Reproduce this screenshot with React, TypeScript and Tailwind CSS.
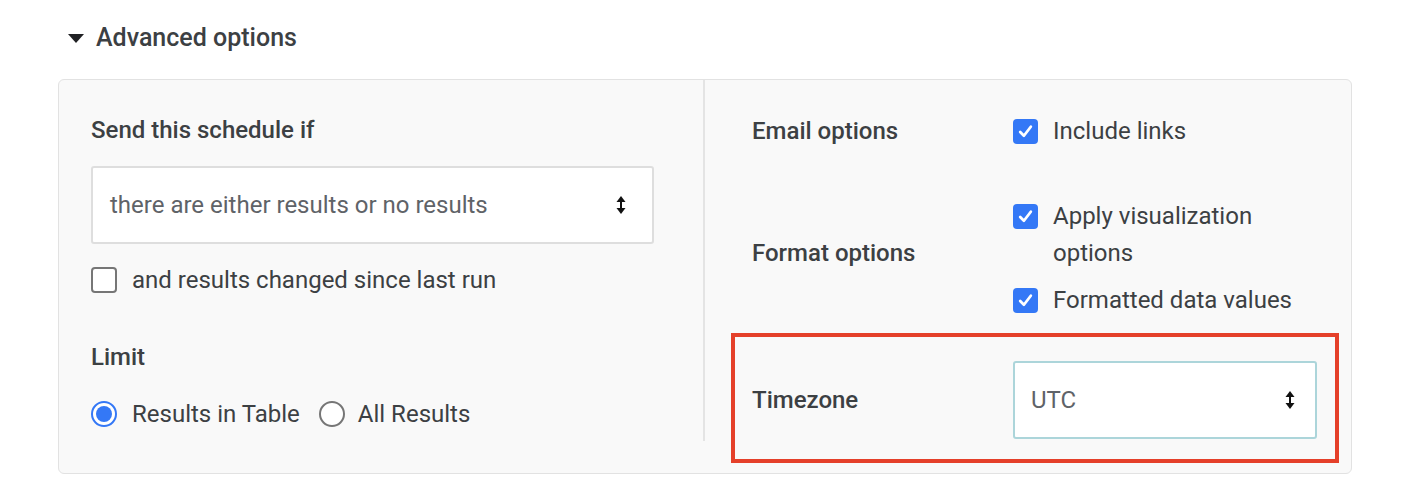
import React from "react";

// double-headed arrow used by the native-looking selects
function SelectArrows() {
  return (
    <svg width="10" height="18" viewBox="0 0 10 18" className="shrink-0">
      <path d="M5 0 L9.5 6 L0.5 6 Z" fill="#111" />
      <rect x="4" y="5" width="2" height="8" fill="#111" />
      <path d="M5 18 L9.5 12 L0.5 12 Z" fill="#111" />
    </svg>
  );
}

function Checked() {
  return (
    <span className="flex h-[25px] w-[25px] shrink-0 items-center justify-center rounded-[4px] bg-[#3478f6]">
      <svg width="17" height="17" viewBox="0 0 16 16">
        <path
          d="M3 8.5 L6.5 12 L13 3.5"
          fill="none"
          stroke="white"
          strokeWidth="2.6"
          strokeLinecap="round"
          strokeLinejoin="round"
        />
      </svg>
    </span>
  );
}

function CheckRow({ children }: { children: React.ReactNode }) {
  return (
    <div className="flex items-start gap-[15px]">
      <div className="flex h-[36px] items-center">
        <Checked />
      </div>
      <span className="leading-[37px]">{children}</span>
    </div>
  );
}

export default function App() {
  return (
    <div className="min-h-screen bg-white pl-[58px] pr-[72px] pt-[20px] text-[24px] text-[#3c4043] [font-family:Roboto,'Liberation_Sans',sans-serif]">
      {/* Header */}
      <div className="flex h-[36px] items-center gap-[12px] pl-[10px]">
        <svg width="16" height="9" viewBox="0 0 16 9">
          <path d="M0 0 L16 0 L8 9 Z" fill="#202124" />
        </svg>
        <span className="text-[25px] font-medium">Advanced options</span>
      </div>

      {/* Panel */}
      <div className="mt-[23px] flex rounded-md border border-[#e2e2e2] bg-[#f9f9f9] pb-[32px]">
        {/* Left column */}
        <div className="w-1/2 border-r-2 border-[#e4e4e4] pb-[9px] pl-[32px] pr-[49px] pt-[32px]">
          <div className="font-medium leading-[36px]">Send this schedule if</div>
          <div className="mt-[18px] flex h-[78px] items-center justify-between rounded-[3px] border-2 border-[#dedede] bg-white pl-[17px] pr-[26px]">
            <span className="text-[#5f6368]">there are either results or no results</span>
            <SelectArrows />
          </div>
          <div className="mt-[18px] flex h-[36px] items-center gap-[15px]">
            <span className="h-[26px] w-[26px] rounded-[4px] border-2 border-[#767676] bg-white" />
            <span>and results changed since last run</span>
          </div>
          <div className="mt-[41px] font-medium leading-[36px]">Limit</div>
          <div className="mt-[21px] flex h-[36px] items-center">
            <span className="flex h-[26px] w-[26px] items-center justify-center rounded-full border-2 border-[#3478f6] bg-white">
              <span className="h-[16px] w-[16px] rounded-full bg-[#3478f6]" />
            </span>
            <span className="ml-[15px]">Results in Table</span>
            <span className="ml-[19px] h-[26px] w-[26px] rounded-full border-2 border-[#767676] bg-white" />
            <span className="ml-[13px]">All Results</span>
          </div>
        </div>

        {/* Right column */}
        <div className="w-1/2 pl-[47px] pr-[34px] pt-[33px]">
          <div className="grid grid-cols-[261px_1fr]">
            <div className="font-medium leading-[36px]">Email options</div>
            <CheckRow>Include links</CheckRow>
          </div>

          <div className="mt-[48px] grid grid-cols-[261px_1fr] items-start">
            <div className="mt-[37px] font-medium leading-[36px]">Format options</div>
            <div className="flex flex-col gap-[10px]">
              <CheckRow>
                Apply visualization
                <br />
                options
              </CheckRow>
              <CheckRow>Formatted data values</CheckRow>
            </div>
          </div>

          <div className="relative mt-[42px] grid grid-cols-[261px_1fr] items-center">
            <div className="font-medium leading-[36px]">Timezone</div>
            <div className="flex h-[78px] items-center justify-between rounded-[3px] border-2 border-[#acd5da] bg-white pl-[16px] pr-[20px]">
              <span className="text-[#5f6368]">UTC</span>
              <SelectArrows />
            </div>
            {/* highlight annotation */}
            <div className="pointer-events-none absolute -bottom-[24px] -left-[21px] -right-[22px] -top-[28px] border-4 border-[#e5402a]" />
          </div>
        </div>
      </div>
    </div>
  );
}
